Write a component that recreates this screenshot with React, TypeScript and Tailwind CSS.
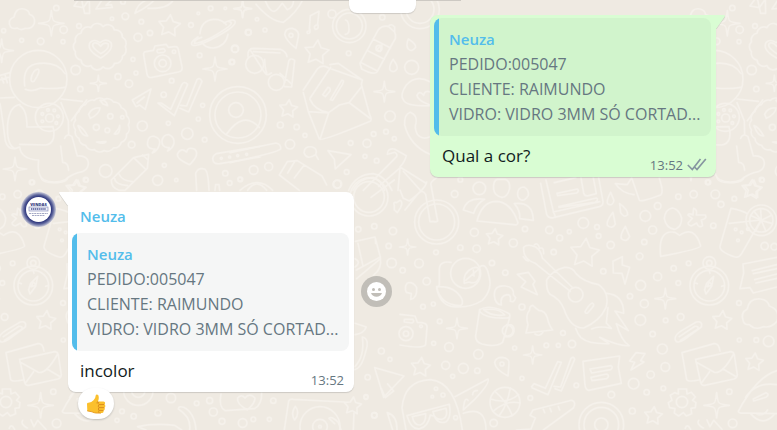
import React from "react";

type Dot = [number, number, number];

function starPath(cx: number, cy: number, r: number, points = 5, inner = 0.52, turn = 0) {
  const pts: string[] = [];
  for (let i = 0; i < points * 2; i++) {
    const a = (Math.PI * i) / points - Math.PI / 2 + turn;
    const rad = i % 2 ? r * inner : r;
    pts.push(`${(cx + rad * Math.cos(a)).toFixed(1)} ${(cy + rad * Math.sin(a)).toFixed(1)}`);
  }
  return `M${pts.join("L")}Z`;
}

function sparklePath(cx: number, cy: number, r: number) {
  const k = r * 0.2;
  return `M${cx} ${cy - r}Q${cx + k / 2} ${cy - k} ${cx + k} ${cy - k}Q${cx + k} ${cy - k / 2} ${cx + r} ${cy}Q${cx + k} ${cy + k / 2} ${cx + k} ${cy + k}Q${cx + k / 2} ${cy + k} ${cx} ${cy + r}Q${cx - k / 2} ${cy + k} ${cx - k} ${cy + k}Q${cx - k} ${cy + k / 2} ${cx - r} ${cy}Q${cx - k} ${cy - k / 2} ${cx - k} ${cy - k}Q${cx - k / 2} ${cy - k} ${cx} ${cy - r}Z`;
}

function scallopPath(cx: number, cy: number, r: number, n: number, squash: number) {
  let d = "";
  for (let i = 0; i <= n; i++) {
    const a = (2 * Math.PI * i) / n;
    const x = (cx + r * Math.cos(a)).toFixed(1);
    const y = (cy + r * squash * Math.sin(a)).toFixed(1);
    d += i === 0 ? `M${x} ${y}` : `A${r * 0.27} ${r * 0.27} 0 0 1 ${x} ${y}`;
  }
  return d;
}

interface DoodleGroup {
  at: [number, number];
  dots: Dot[];
  stars: Dot[];
  sparkles: Dot[];
  paths: string[];
}

const groups: DoodleGroup[] = [
  {
    at: [0, 0],
    dots: [[169,24,8],[191,89,11],[122,124,10],[65,121,6],[189,125,6],[237,78,7],[376,49,10],[336,56,5],[424,65,7],[414,112,12],[450,99,8],[573,75,7],[632,25,7],[595,40,4],[676,25,4],[745,97,9],[705,146,11],[695,186,8],[599,166,7],[399,178,6],[408,219,6],[227,210,14],[354,230,9],[241,267,8],[387,251,11],[515,242,7],[491,284,8],[608,316,6],[595,357,6],[505,370,6],[427,378,15],[562,401,17],[614,419,7],[395,434,10],[493,496,6],[317,513,19],[473,541,15],[529,540,5],[676,520,8],[689,549,7],[720,538,6],[97,547,7],[259,540,6],[11,92,6],[369,5,7],[115,237,86],[148,352,42],[149,354,12],[127,342,4],[144,330,4],[163,331,4],[174,349,4],[169,369,4],[127,364,4],[488,190,25],[488,190,11],[522,155,5],[708,330,22],[714,345,85],[714,345,69],[331,349,8],[289,382,9],[367,352,5],[322,391,7],[664,475,3],[689,471,3],[713,467,3],[740,463,3]],
    stars: [[508,78,34],[231,568,28]],
    sparkles: [[154,70,38],[645,207,36],[295,250,24],[45,507,35],[728,27,24],[5,152,35]],
    paths: [
      "M32 81Q20 60 42 51Q48 22 72 27Q88 31 88 43Q108 50 103 70Q96 88 76 85Q62 93 52 84Q38 88 32 81Z",
      scallopPath(300, 140, 76, 13, 0.8),
      scallopPath(305, 375, 80, 17, 0.96),
      "M302 174Q258 150 270 128Q282 115 300 128Q318 113 333 128Q342 150 302 174ZM302 161Q268 138 282 129Q294 127 302 139Q311 124 325 132Q328 148 302 161Z",
      "M438 155Q430 155 431 165L441 222Q443 235 456 232L535 216Q549 213 546 200L535 148Q533 138 522 140L505 142L498 133L465 138L460 151ZM473 149L491 146Q500 153 491 157L475 159Q468 154 473 149Z",
      "M600 101Q603 62 640 58Q666 57 679 74M594 111Q568 128 577 135Q591 143 652 109Q713 75 705 63Q698 55 672 69M605 112Q582 119 583 130Q617 128 683 82Q703 67 687 65M605 126Q616 145 641 144Q678 138 684 103",
      "M74 258Q66 194 118 190Q173 185 195 221M76 268Q96 277 122 264Q153 268 195 262M93 237Q98 210 114 207Q121 210 111 229L102 244Q93 248 93 237",
      "M60 314Q29 317 23 371Q19 435 45 446L59 441Q63 478 116 480Q110 528 131 539Q161 553 196 539Q218 520 247 515Q271 504 263 480Q255 466 232 468L216 410Q200 398 194 415M60 317Q81 329 81 381L159 380Q170 430 137 435L59 433M182 438L188 487Q205 487 206 511M0 226L30 218M0 294L43 292M0 311Q6 344 16 423Q24 449 45 446M183 297L247 304M183 308L205 363L206 405M0 239L25 232M6 233L11 249M16 227L22 248M214 362L260 300",
      "M266 343Q275 322 300 324Q298 343 271 355ZM234 377Q249 382 263 408Q246 410 234 377ZM300 301Q318 298 323 317L309 312ZM343 402Q359 384 359 376Q361 406 343 402ZM290 426L318 425Q311 434 290 426Z",
      "M397 300L453 267L436 328L419 315L408 320ZM411 309L433 291",
      "M474 309L484 309L512 328L546 253Q553 242 563 253L523 347ZM542 316L560 318L591 239Q600 231 606 244L566 336L540 325",
      "M459 447Q439 444 443 425Q446 407 462 409Q484 415 478 434Q473 452 457 459L465 447ZM503 443Q484 440 486 422Q490 403 507 404Q524 411 522 430Q518 446 503 453L508 443Z",
      "M569 494Q531 479 532 463Q541 441 560 456Q563 440 583 447Q602 463 569 494Z",
      "M446 463L401 473L334 540Q333 562 357 571L375 571L442 505ZM401 473L435 506M344 535Q345 554 383 557M357 522Q365 542 397 545M428 465L444 480",
      "M780 439L649 461Q634 470 640 484Q645 493 660 491L780 471M680 402Q730 330 778 382",
      "M590 571L587 520Q595 501 615 508Q625 515 627 571M645 571L647 554L657 554L659 571M743 571Q770 532 800 571",
      "M222 18L235 0M222 18L250 23L266 0M245 0L254 40L269 40L268 0M306 0L288 27L337 22L334 14L318 16L335 0M405 40Q413 10 440 0M405 40Q445 20 463 0M444 25Q503 28 520 0",
    ],
  },
  {
    at: [230, 0],
    dots: [[81,58,5],[55,97,8],[105,90,6],[15,147,10],[7,186,7],[183,106,6],[356,160,7],[306,42,12],[457,52,8],[358,78,50],[358,78,39],[151,375,9],[200,381,8],[225,406,6],[180,433,14],[71,510,13],[116,500,12],[31,538,7],[362,429,7],[411,430,12],[431,402,7],[468,395,7],[493,416,6],[405,469,6],[440,482,7],[350,516,7],[323,552,12],[480,349,16],[545,202,21],[139,247,24],[74,193,27],[570,28,58],[570,28,42],[447,145,9]],
    stars: [[260,158,38],[175,327,28]],
    sparkles: [[38,26,27],[463,275,31]],
    paths: [
      "M78 13Q122 65 160 67Q200 38 218 0M105 0Q124 49 143 27L157 10L172 29Q192 21 190 0",
      "M238 88L241 47L267 34L263 72Q269 87 256 88Q249 80 259 75M238 93Q229 92 232 100Q242 103 240 88",
      "M198 145Q168 122 164 103Q166 84 187 85Q210 92 205 111Z",
      "M54 170Q51 145 71 145L151 148Q169 155 171 170M62 152L103 216Q111 230 124 219M70 155L150 159M104 178Q105 208 110 218M164 248L176 184Q180 172 194 181L185 261L164 260M150 220L186 253",
      "M220 270L262 207Q276 191 296 204L395 239M220 278L235 335L268 417Q275 425 422 363Q426 357 419 344L394 253L397 240L325 190L300 194M240 295L302 202M240 298Q254 331 296 338L328 315L357 308L394 261M296 339L270 418M235 335L296 339M359 309L423 357M278 284L294 262Q303 263 300 273L286 290ZM301 299L335 241Q345 240 337 254L308 301Z",
      "M390 190L444 91Q454 76 475 79L494 96Q501 114 490 126L441 216Q430 226 395 207ZM391 187L441 212M415 153L463 178M429 117L482 144M474 80Q483 68 494 81L494 94M440 150L456 133L451 154Z",
      "M489 178Q474 202 481 211Q492 220 501 207Q505 199 489 178ZM535 117Q527 137 535 147Q545 158 557 142Q559 132 535 117Z",
      "M600 245Q557 223 529 255Q508 285 521 301Q530 319 600 317M600 315Q562 301 561 286Q568 270 581 286Q584 270 600 276",
      "M600 463Q540 437 524 375Q522 343 541 337Q563 346 558 370Q552 381 562 403Q577 421 600 410",
      "M0 458L138 429Q154 433 152 447Q147 457 0 488M257 464Q230 482 222 458Q223 437 247 441Q264 446 257 464L265 478",
      "M294 452L363 464L316 507L313 478ZM148 525L172 485L202 482L276 528L290 555M148 525L208 571M173 519L195 483M193 534L222 496",
      "M472 463Q472 444 493 447L529 467Q525 485 510 501L587 549M473 463L495 457Q506 465 497 473L400 571M510 504L446 559M510 504L504 571M520 514L571 571",
      "M356 571Q378 523 429 521Q464 526 486 571M369 571Q391 532 430 533Q456 542 464 571M30 571Q83 525 128 571",
      "M347 60Q357 63 357 88Q358 101 346 103",
    ],
  },
  {
    at: [400, 170],
    dots: [[164,72,10],[181,29,7],[223,187,12],[181,233,8],[230,236,11],[108,247,7],[57,280,13],[8,301,8],[80,334,11],[69,410,7],[100,402,6],[119,454,7],[101,520,6],[147,531,13],[137,586,12],[190,595,15],[232,602,8],[158,619,6],[235,553,14],[276,279,8],[316,308,8],[366,411,9],[344,534,6],[489,489,7],[439,526,7],[475,526,6],[516,522,11],[366,625,6],[391,684,7],[529,646,7],[281,759,11],[167,743,6],[375,177,8],[340,219,12],[448,180,11],[508,185,6],[479,204,9],[461,246,8],[550,159,16],[591,171,7],[596,198,7],[632,225,11],[610,304,8],[690,379,8],[722,346,15],[733,401,12],[721,450,16],[733,216,8],[758,180,12],[736,138,16],[773,108,10],[719,259,10],[773,320,12],[821,295,8],[835,339,7],[866,280,7],[797,451,7],[842,441,10],[758,492,8],[787,537,15],[796,591,13],[752,614,11],[790,655,7],[740,667,8],[701,641,16],[634,674,10],[697,723,9],[998,760,13],[988,665,8],[1018,510,6],[1069,510,7],[1106,514,16],[1017,399,7],[940,167,8],[1094,228,11],[963,103,9],[946,73,13],[1003,86,7],[881,73,11],[835,80,8],[923,37,7],[1085,29,7],[1123,230,10],[110,156,66],[110,156,54],[238,55,19],[197,310,45],[18,491,21],[18,491,8],[63,469,4],[323,482,16],[306,582,6],[315,697,45],[527,374,22],[604,764,67],[604,764,52],[604,764,20],[928,347,58],[928,347,46],[928,279,19],[928,279,8],[846,696,17],[1084,151,46],[1084,151,35],[108,656,5],[129,675,6],[97,680,4],[1007,178,4],[1025,187,4],[1044,177,4],[1014,211,4]],
    stars: [[283,202,26],[554,250,45],[62,592,30],[1054,59,30],[966,452,30],[1063,577,28],[760,738,28]],
    sparkles: [[23,231,24],[171,475,31],[398,555,27],[796,386,31],[950,706,38]],
    paths: [
      "M281 58Q279 31 292 28L316 28Q330 32 329 55Q323 81 306 82Q284 78 281 58ZM353 70Q354 51 372 51Q387 59 385 76Q375 93 364 90Q352 84 353 70ZM231 153Q245 97 286 94Q333 94 354 158Q352 167 341 164ZM190 120Q201 80 254 88Q229 101 221 130ZM343 101Q399 94 400 151L359 146Q362 123 343 101Z",
      "M80 36Q76 57 28 93L10 85L0 60M102 154L90 155L77 73Q66 55 51 75L15 120M93 45Q89 38 110 23M93 45L113 153Q106 158 102 154",
      "M422 40L440 133Q446 146 460 143L598 110Q611 106 609 94L596 23M438 30L460 124L467 142M460 126L599 95M463 38L527 23M471 70L532 57Q539 63 530 69L473 77ZM477 110L589 84Q598 89 585 97L477 112M543 23L551 69Q554 80 566 77L589 71L580 23",
      "M646 41L682 44L695 23M646 41Q665 70 702 74M695 23L718 90Q720 98 782 75Q789 70 785 50L778 24M632 67Q617 94 624 102Q638 110 642 91ZM639 127Q618 154 622 166Q637 179 646 162ZM676 169Q660 194 664 206Q680 219 689 200ZM659 101Q684 119 683 134Q672 145 662 128Z",
      "M817 114Q796 118 793 145Q798 174 823 178Q845 173 845 145Q838 118 817 114ZM782 259Q773 178 825 187L839 196Q884 165 902 228Q901 237 782 259Z",
      "M881 115Q893 119 889 135L916 135Q923 145 904 150L908 167Q897 176 890 159L874 168Q859 163 867 156L877 145L864 135Q866 128 879 135Z",
      "M993 115Q1027 121 1042 131M993 115L960 229Q958 245 1005 261Q1017 264 1025 251L1083 150L988 160M1084 151L1082 116M1084 151L1115 136M1084 151L1117 161M1084 151L1098 184M1084 151L1066 184M1084 151L1054 137M1084 151L1062 124",
      "M153 277Q121 272 118 295L118 345L110 355Q120 402 154 409Q205 417 246 392Q280 358 266 314Q258 277 239 291M110 350Q166 347 186 388Q191 407 178 407Q120 404 110 350ZM193 340Q188 308 219 294Q241 286 239 314Q234 346 207 336ZM197 331L234 299M220 300L222 318",
      "M352 313L385 307L405 334L399 343L412 374L364 351L377 335ZM639 274L667 260V285L689 292L675 342L666 310L640 309ZM708 548L735 551L722 572L732 576L693 600L704 577L689 573Z",
      "M371 232Q381 220 407 231Q424 243 427 264L519 354M371 232Q368 267 406 280L511 364M403 225Q413 215 419 235Q432 230 431 251M370 260L378 270L385 273M440 330Q456 301 494 292Q519 291 528 311Q551 336 596 344Q630 369 618 413Q599 454 551 474Q511 475 492 417Q479 386 450 373Q438 360 440 330ZM555 425Q568 402 577 399Q586 403 576 414L563 429Q558 432 555 425Z",
      "M620 370Q671 374 671 430L645 423L685 482L649 461Q664 513 688 527Q659 530 599 502L627 521Q566 523 543 503Q533 493 527 475M624 413L619 459L634 475Q595 466 575 477",
      "M398 406Q388 408 389 420Q375 435 384 465L378 489L458 480Q447 467 442 443Q435 421 416 421ZM405 492Q420 502 430 485M283 376Q283 344 316 348Q343 351 340 374L347 383Q343 399 331 394Q334 376 324 374Q299 376 304 405Q285 402 283 376Z",
      "M239 419L227 498Q226 516 246 522Q287 533 308 517L329 443M239 419Q270 400 328 431Q334 444 319 444Q258 446 240 426ZM251 419Q298 413 314 435Q273 440 251 419M320 464Q345 460 342 485Q337 505 313 499",
      "M0 433L45 438L52 457Q83 457 81 472L77 523Q71 538 0 525M13 448L39 448Q44 456 36 459L13 456ZM32 388Q52 385 50 353Q39 334 22 339Q12 351 19 367L34 371Z",
      "M6 714Q13 632 91 629Q167 635 187 780M6 714L18 780M21 737L148 703Q155 745 137 756Q115 763 103 739L91 735Q84 770 60 776Q34 781 21 737M37 740L77 731Q78 760 61 765Q42 767 37 740ZM99 725L138 715Q145 743 126 748Q103 750 99 725ZM165 680L264 627Q271 639 224 688L190 720Q193 678 204 691M218 674Q219 660 232 662M190 730Q258 706 258 780",
      "M285 664Q320 694 337 736M299 735Q323 704 331 654M272 687Q318 704 356 674M279 724Q320 689 360 699",
      "M395 650L402 641L436 655L473 575L484 577L444 674L396 653M462 649L482 651L513 565Q521 558 524 568L484 663L465 656M324 618Q285 599 284 577Q288 562 306 562Q330 565 327 582Z",
      "M549 574L659 558L655 591L664 640L566 661Q557 660 555 645ZM570 597L633 587Q641 592 632 599L575 609ZM573 622L620 612Q631 618 620 626L576 632Z",
      "M826 510Q822 496 845 482L889 456Q909 452 904 471L854 508Q831 523 826 510ZM838 500L885 469Q898 468 893 478L842 511",
      "M846 548L942 521Q957 519 960 543M846 548L860 628Q862 637 897 630M887 568L992 545Q1001 545 1003 555L1012 614Q1012 623 1002 627L914 646Q904 647 902 637ZM888 576L943 607Q967 613 1001 552M904 640L929 605M969 597L1010 621",
      "M914 359L920 340L941 319L935 349L918 372ZM928 335L936 346L922 350ZM928 304L930 310M971 347L965 349M886 339L892 341",
      "M1131 262L1029 282L1031 309L1020 356L1050 353L1060 369L1131 351M1057 302L1131 284M1060 311L1131 296M1064 329L1131 312M1068 339L1131 325",
      "M1030 454Q1020 428 1042 417Q1048 383 1082 387Q1103 389 1108 408Q1142 420 1131 454Q1112 475 1090 470Q1066 482 1048 464Q1035 465 1030 454Z",
      "M1131 602Q1070 620 1015 724Q1015 731 1035 729L1131 731M1037 682Q1069 634 1131 644M1060 687L1098 668Q1111 674 1098 682L1061 693ZM1070 731Q1089 741 1103 720M1052 731Q1089 774 1125 731",
      "M835 657L860 657L861 672L874 667L886 681L878 691L888 698L886 713L873 715L875 731L859 738L850 728L836 738L823 729L825 716L809 713L805 698L816 691L811 676L824 668L835 672Z",
      "M390 736L399 720L515 691Q530 696 520 714L430 780M390 736L406 744L393 777L350 780M430 718L434 728M450 715L454 725M475 710L479 720",
      "M896 751Q889 763 910 774M921 750L930 770Q941 751 941 751L966 778M856 775Q861 759 872 778M951 23Q955 39 990 38Q1029 38 1031 23",
    ],
  },
  {
    at: [110, 384],
    dots: [[183,42,14],[85,20,44],[85,20,20],[144,87,9],[71,97,8],[36,82,7],[21,109,6],[260,58,7],[299,50,9],[310,84,12],[336,112,9],[398,117,13],[430,106,7],[478,106,6],[490,50,8],[768,40,6],[793,94,8],[630,128,60],[630,128,22],[630,128,4]],
    stars: [[728,66,27]],
    sparkles: [],
    paths: [
      "M412 78Q379 59 383 42Q395 29 405 42Q419 25 435 42Q436 57 412 78ZM333 30Q325 70 346 80L433 74Q456 63 455 27",
      "M523 138L536 51Q540 44 550 46L702 54M732 88L730 138M556 67Q541 88 554 108Q571 87 556 67ZM657 103Q665 95 685 115L693 138M657 103L674 119",
      "M205 75Q206 65 221 70Q254 86 258 138M205 75Q244 99 239 138M83 128Q130 117 194 124L215 138M83 128L108 138M814 14L826 41L851 21L833 0M832 86Q862 95 861 138M832 86L848 138",
    ],
  },
  {
    at: [200, 180],
    dots: [[411,13,12],[507,51,57],[507,51,46],[523,139,8],[475,148,8],[566,198,8],[579,153,11],[575,249,14],[544,513,9],[570,538,6],[503,592,8],[498,650,6],[523,706,8]],
    stars: [],
    sparkles: [],
    paths: [
      "M513 52L583 0M583 76Q578 65 590 68L600 61Q610 65 602 82L592 98L583 90Z",
      "M466 184L525 171L541 231L469 270M474 190L489 258M526 174L527 190M470 296L538 239M465 236Q485 246 465 261M541 233Q547 267 520 286",
      "M524 563L612 588L551 652ZM465 430L499 441Q491 461 465 464M487 471Q510 476 497 515Q485 566 463 569M465 560Q495 528 487 471",
    ],
  },
];

function Wallpaper() {
  return (
    <svg className="absolute inset-0 -z-10 h-full w-full" aria-hidden="true">
      <defs>
        <g id="doodles" className="fill-none stroke-[#f5f1eb]" strokeWidth="5" strokeLinejoin="round" strokeLinecap="round">
          {groups.map((g) => (
            <g key={g.at.join()} transform={`translate(${g.at[0]} ${g.at[1]}) scale(.3333)`}>
              {g.dots.map(([x, y, r], i) => <circle key={i} cx={x} cy={y} r={r} />)}
              {g.stars.map(([x, y, r], i) => <path key={i} d={starPath(x, y, r, 5, 0.52, 0.1)} />)}
              {g.sparkles.map(([x, y, r], i) => <path key={i} d={sparklePath(x, y, r)} />)}
              {g.paths.map((d, i) => <path key={i} d={d} />)}
            </g>
          ))}
        </g>
        <pattern id="wallpaper" width="676" height="430" patternUnits="userSpaceOnUse">
          <use href="#doodles" />
          <use href="#doodles" x="-676" />
        </pattern>
      </defs>
      <rect width="100%" height="100%" fill="url(#wallpaper)" />
    </svg>
  );
}

function Quote({ tone }: { tone: string }) {
  return (
    <blockquote className={`flex overflow-hidden rounded-lg text-base leading-[25px] text-[#667781] ${tone}`}>
      <span className="w-[5px] shrink-0 bg-[#53bdeb]" />
      <div className="min-w-0 pt-2 pr-2 pb-[9px] pl-[10px]">
        <p className="text-[15px] leading-[26px] font-semibold text-[#53bdeb]">Neuza</p>
        <p>PEDIDO:005047</p>
        <p>CLIENTE: RAIMUNDO</p>
        <p className="whitespace-nowrap">VIDRO: VIDRO 3MM SÓ CORTAD...</p>
      </div>
    </blockquote>
  );
}

function DoubleCheck() {
  return (
    <svg width="20" height="14" viewBox="0 0 20 14" className="fill-none stroke-[#8696a0]" strokeWidth="1.7" aria-label="Entregue">
      <path d="M.8 7L5.3 11.500L13.500 1M7.500 9L10 11.500L18.800 1" />
    </svg>
  );
}

function Avatar() {
  return (
    <svg width="35" height="35" viewBox="0 0 35 35" className="mr-3 shrink-0" role="img" aria-label="Vendas">
      <defs>
        <radialGradient id="ring">
          <stop offset="0.74" stopColor="#343c80" />
          <stop offset="0.84" stopColor="#5d659c" />
          <stop offset="1" stopColor="#c9cad8" />
        </radialGradient>
      </defs>
      <circle cx="17.5" cy="17.5" r="17.5" fill="url(#ring)" />
      <circle cx="17.5" cy="17.5" r="12.5" fill="#fff" />
      <text x="17.5" y="13.5" textAnchor="middle" fontSize="4" fontWeight="800" fill="#343c80">VENDAS</text>
      <rect x="8" y="15" width="19" height="4" fill="#eef0f8" stroke="#7a81b2" strokeWidth=".6" />
      <path d="M10 17H25" stroke="#4a5292" strokeWidth="1.3" strokeDasharray="1.300 .6" />
      <path d="M8 21.500H27M11 23.500H24" stroke="#8d92b5" strokeWidth=".8" strokeDasharray="2 .6" />
    </svg>
  );
}

function ThumbsUp() {
  return (
    <svg width="20" height="20" viewBox="0 0 20 20" aria-hidden="true">
      <path d="M1 10Q1 8.8 2.2 8.7Q5.5 8.8 7.5 6.3Q9.7 4 9.7 1.5Q9.8.4 11.2.5Q13 .9 12.8 3.7Q12.8 5.5 12 7.5L17.5 7.5Q19.3 7.8 19.1 9.2Q19 10.2 18.3 10.5Q19.7 11.1 19.3 12.5Q19 13.4 18.3 13.6Q19.2 14.5 18.7 15.6Q18.3 16.4 17.4 16.5Q18 17.5 17.2 18.4Q16.5 19.1 14.5 19.1L9.5 19Q7.5 18.8 6 17.8L1.3 17Z" fill="#fbc02d" />
      <path d="M12 7.5Q10.9 8.1 10.8 9.3M18.3 10.5L13.1 10.6M18.3 13.6L13 13.6M17.4 16.5L13 16.4M12.7 7.9Q11 9.2 13.1 10.6Q11.2 12 13 13.6Q11.5 15 13 16.4Q12 17.8 13.2 19" fill="none" stroke="#d98a1c" strokeWidth=".9" />
      <path d="M1.2 16.8L6 17.8Q8 18.9 10 19L15 19.1" fill="none" stroke="#e59a1f" strokeWidth=".9" />
    </svg>
  );
}

export default function App() {
  return (
    <main className="relative isolate min-h-screen overflow-hidden bg-[#efeae2] font-['Open_Sans','Noto_Sans',sans-serif]">
      <Wallpaper />

      <div className="relative ml-[74px] h-px w-[387px] bg-[#cdc9c3]">
        <div className="absolute top-0 left-[275px] h-[13px] w-[67px] rounded-b-lg bg-white shadow-[0_1px_1px_rgba(11,20,26,0.15)]" />
      </div>

      <section className="mt-[14px] flex justify-end pr-[61px]">
        <article className="relative w-[286px] rounded-lg rounded-tr-none bg-[#d9fdd3] pt-[3px] pr-[5px] pb-1 pl-1 shadow-[0_1px_1px_rgba(11,20,26,0.15)]">
          <svg width="9" height="14" viewBox="0 0 9 14" className="absolute top-0 left-full" aria-hidden="true">
            <path d="M0 1H8Q9.500 1 8.500 3L0 15Z" fill="#0b141a" fillOpacity=".13" />
            <path d="M0 0H8Q9.500 0 8.500 2L0 14Z" fill="#d9fdd3" />
          </svg>
          <Quote tone="bg-[#d1f4cc]" />
          <div className="flex items-end justify-between pt-[6px] pl-2">
            <p className="pb-[3px] text-[17px] leading-7 text-[#111b21]">Qual a cor?</p>
            <div className="flex items-center gap-1 pr-1 text-[13px] leading-4 text-[#667781]">
              <time>13:52</time>
              <DoubleCheck />
            </div>
          </div>
        </article>
      </section>

      <section className="mt-[15px] flex items-start pl-[21px]">
        <Avatar />
        <article className="relative w-[286px] rounded-lg rounded-tl-none bg-white pt-[11px] pr-[5px] pb-1 pl-1 shadow-[0_1px_1px_rgba(11,20,26,0.15)]">
          <svg width="9" height="14" viewBox="0 0 9 14" className="absolute top-0 right-full" aria-hidden="true">
            <path d="M9 1H1Q-.5 1 .5 3L9 15Z" fill="#0b141a" fillOpacity=".13" />
            <path d="M9 0H1Q-.5 0 .5 2L9 14Z" fill="#fff" />
          </svg>
          <h2 className="pb-1 pl-2 text-[15px] leading-[26px] font-semibold text-[#53bdeb]">Neuza</h2>
          <Quote tone="bg-[#f5f6f6]" />
          <div className="flex items-end justify-between pt-[6px] pl-2">
            <p className="pb-[3px] text-[17px] leading-7 text-[#111b21]">incolor</p>
            <time className="pr-[5px] text-[13px] leading-4 text-[#667781]">13:52</time>
          </div>
          <button type="button" aria-label="Reação: polegar para cima" className="absolute top-full left-[10px] -mt-1 flex h-[31px] w-9 items-center justify-center rounded-full bg-white shadow-[0_1px_2px_rgba(11,20,26,0.2)]">
            <ThumbsUp />
          </button>
        </article>
        <button type="button" aria-label="Reagir" className="mt-[84px] ml-[7px] flex size-[31px] items-center justify-center rounded-full bg-[#c1beb8]">
          <svg width="19" height="19" viewBox="0 0 19 19" aria-hidden="true">
            <circle cx="9.500" cy="9.500" r="9.500" fill="#fff" />
            <circle cx="6.500" cy="7.500" r="1.500" fill="#c1beb8" />
            <circle cx="12.500" cy="7.500" r="1.500" fill="#c1beb8" />
            <path d="M4 11H15Q13.500 14.800 9.500 14.800T4 11Z" fill="#c1beb8" />
          </svg>
        </button>
      </section>
    </main>
  );
}
